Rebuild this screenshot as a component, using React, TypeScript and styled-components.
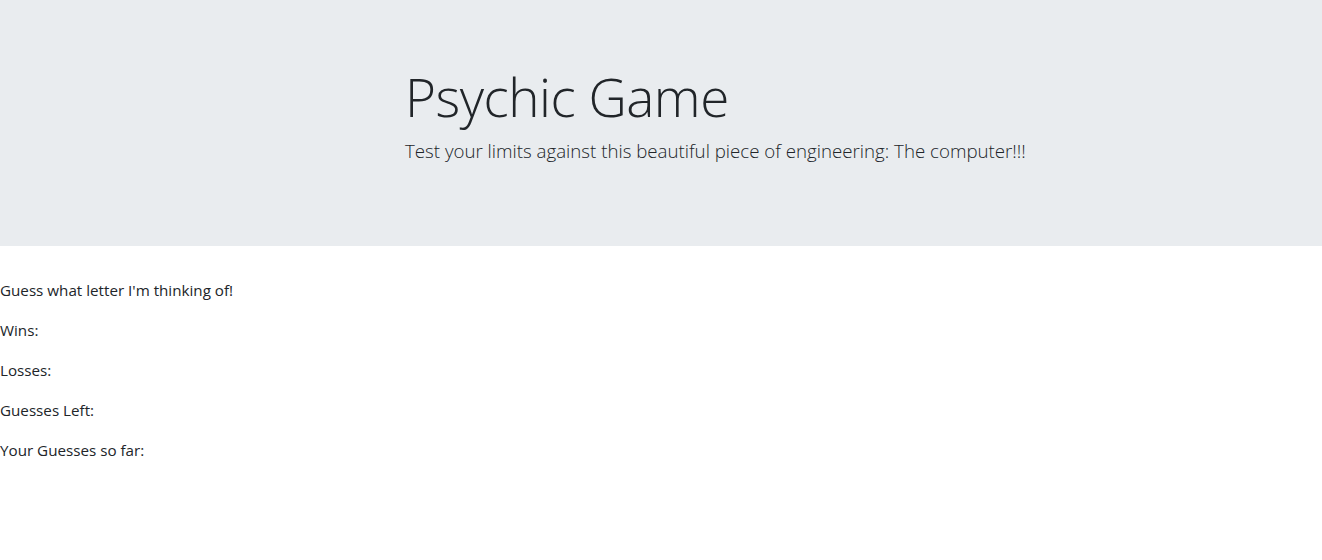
import React from "react";
import styled, { createGlobalStyle } from "styled-components";

const Global = createGlobalStyle`
  html, body { margin: 0; padding: 0; background: #fff; }
  body {
    font-family: "Open Sans", "Noto Sans", sans-serif;
    font-size: 16px;
    line-height: 1.5;
    color: #212529;
  }
  * { box-sizing: border-box; }
`;

const Jumbotron = styled.header`
  background: #e9ecef;
  padding: 63px 0 64px;
  margin-bottom: 32px;
`;

const Container = styled.div`
  max-width: 1140px;
  margin: 0 auto;
  padding: 0 15px;
`;

const Row = styled.div`
  display: flex;
`;

const Column = styled.div`
  margin-left: 284px;
  padding: 0 15px;
  flex: 1;
`;

const Title = styled.h1`
  margin: 0 0 6px;
  font-size: 53px;
  font-weight: 300;
  line-height: 67px;
  letter-spacing: -0.5px;
`;

const Lead = styled.p`
  margin: 0 0 16px;
  font-size: 18.7px;
  font-weight: 300;
  line-height: 30px;
  color: #212529;
`;

const Line = styled.p`
  margin: 0 0 16px;
  font-size: 15.2px;
  line-height: 24px;
`;

export default function App() {
  return (
    <>
      <Global />
      <Jumbotron>
        <Container>
          <Row>
            <Column>
              <Title>Psychic Game</Title>
              <Lead>Test your limits against this beautiful piece of engineering: The computer!!!</Lead>
            </Column>
          </Row>
        </Container>
      </Jumbotron>
      <main>
        <Line>Guess what letter I'm thinking of!</Line>
        <Line>Wins: </Line>
        <Line>Losses: </Line>
        <Line>Guesses Left: </Line>
        <Line>Your Guesses so far: </Line>
      </main>
    </>
  );
}
